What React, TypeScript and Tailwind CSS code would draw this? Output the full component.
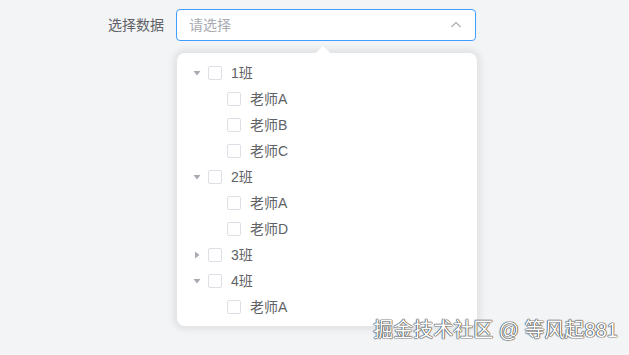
import React from 'react';

type Node = { label: string; children?: Node[]; open?: boolean };

const data: Node[] = [
  { label: '1班', open: true, children: [{ label: '老师A' }, { label: '老师B' }, { label: '老师C' }] },
  { label: '2班', open: true, children: [{ label: '老师A' }, { label: '老师D' }] },
  { label: '3班', open: false, children: [{ label: '老师E' }] },
  { label: '4班', open: true, children: [{ label: '老师A' }] },
];

function Caret({ open }: { open: boolean }) {
  return (
    <svg width="8" height="8" viewBox="0 0 8 8" className="text-[#a8abb2]">
      {open ? <path d="M0.5 2 L7.5 2 L4 6.5 Z" fill="currentColor" /> : <path d="M2 0.5 L6.5 4 L2 7.5 Z" fill="currentColor" />}
    </svg>
  );
}

function Row({ node, level }: { node: Node; level: number }) {
  const hasKids = !!node.children;
  return (
    <>
      <div className="flex h-[26px] items-center" style={{ paddingLeft: 12 + level * 19 }}>
        <span className="flex w-[16px] items-center justify-center">{hasKids && <Caret open={!!node.open} />}</span>
        <span className="ml-[3px] h-[14px] w-[14px] rounded-[2px] border border-[#dcdfe6] bg-white" />
        <span className="ml-[9px] text-[14px] text-[#606266]">{node.label}</span>
      </div>
      {hasKids && node.open && node.children!.map((c, i) => <Row key={i} node={c} level={level + 1} />)}
    </>
  );
}

export default function App() {
  return (
    <div
      className="relative h-[355px] w-[629px] overflow-hidden bg-[#f3f4f6]"
      style={{ fontFamily: '"Liberation Sans", "Noto Sans CJK SC", sans-serif' }}
    >
      <div className="flex items-center pt-[9px]">
        <span className="ml-[108px] w-[68px] text-[14px] text-[#606266]">选择数据</span>
        <div className="flex h-[32px] w-[300px] items-center justify-between rounded-[4px] border border-[#409eff] bg-white pl-[12px] pr-[12px]">
          <span className="text-[14px] text-[#a8abb2]">请选择</span>
          <svg width="14" height="14" viewBox="0 0 14 14" fill="none" stroke="#a8abb2" strokeWidth="1.1">
            <path d="M2.5 9 L7 4.5 L11.5 9" />
          </svg>
        </div>
      </div>
      <div className="relative ml-[177px] mt-[12px] w-[300px] rounded-[8px] bg-white pb-[6px] pt-[7px] shadow-[0_0_6px_4px_rgba(0,0,0,0.07)]">
        <span className="absolute left-[141px] top-[-5px] h-[10px] w-[10px] rotate-45 bg-white" />
        {data.map((n, i) => (
          <Row key={i} node={n} level={0} />
        ))}
      </div>
      <div
        className="absolute bottom-[10px] right-[11px] text-[20px] text-white"
        style={{ textShadow: '0 0 1px #444, 0 0 1px #444, 0 0 1px #444, 0 0 1px #444' }}
      >
        掘金技术社区 @ 等风起881
      </div>
    </div>
  );
}
